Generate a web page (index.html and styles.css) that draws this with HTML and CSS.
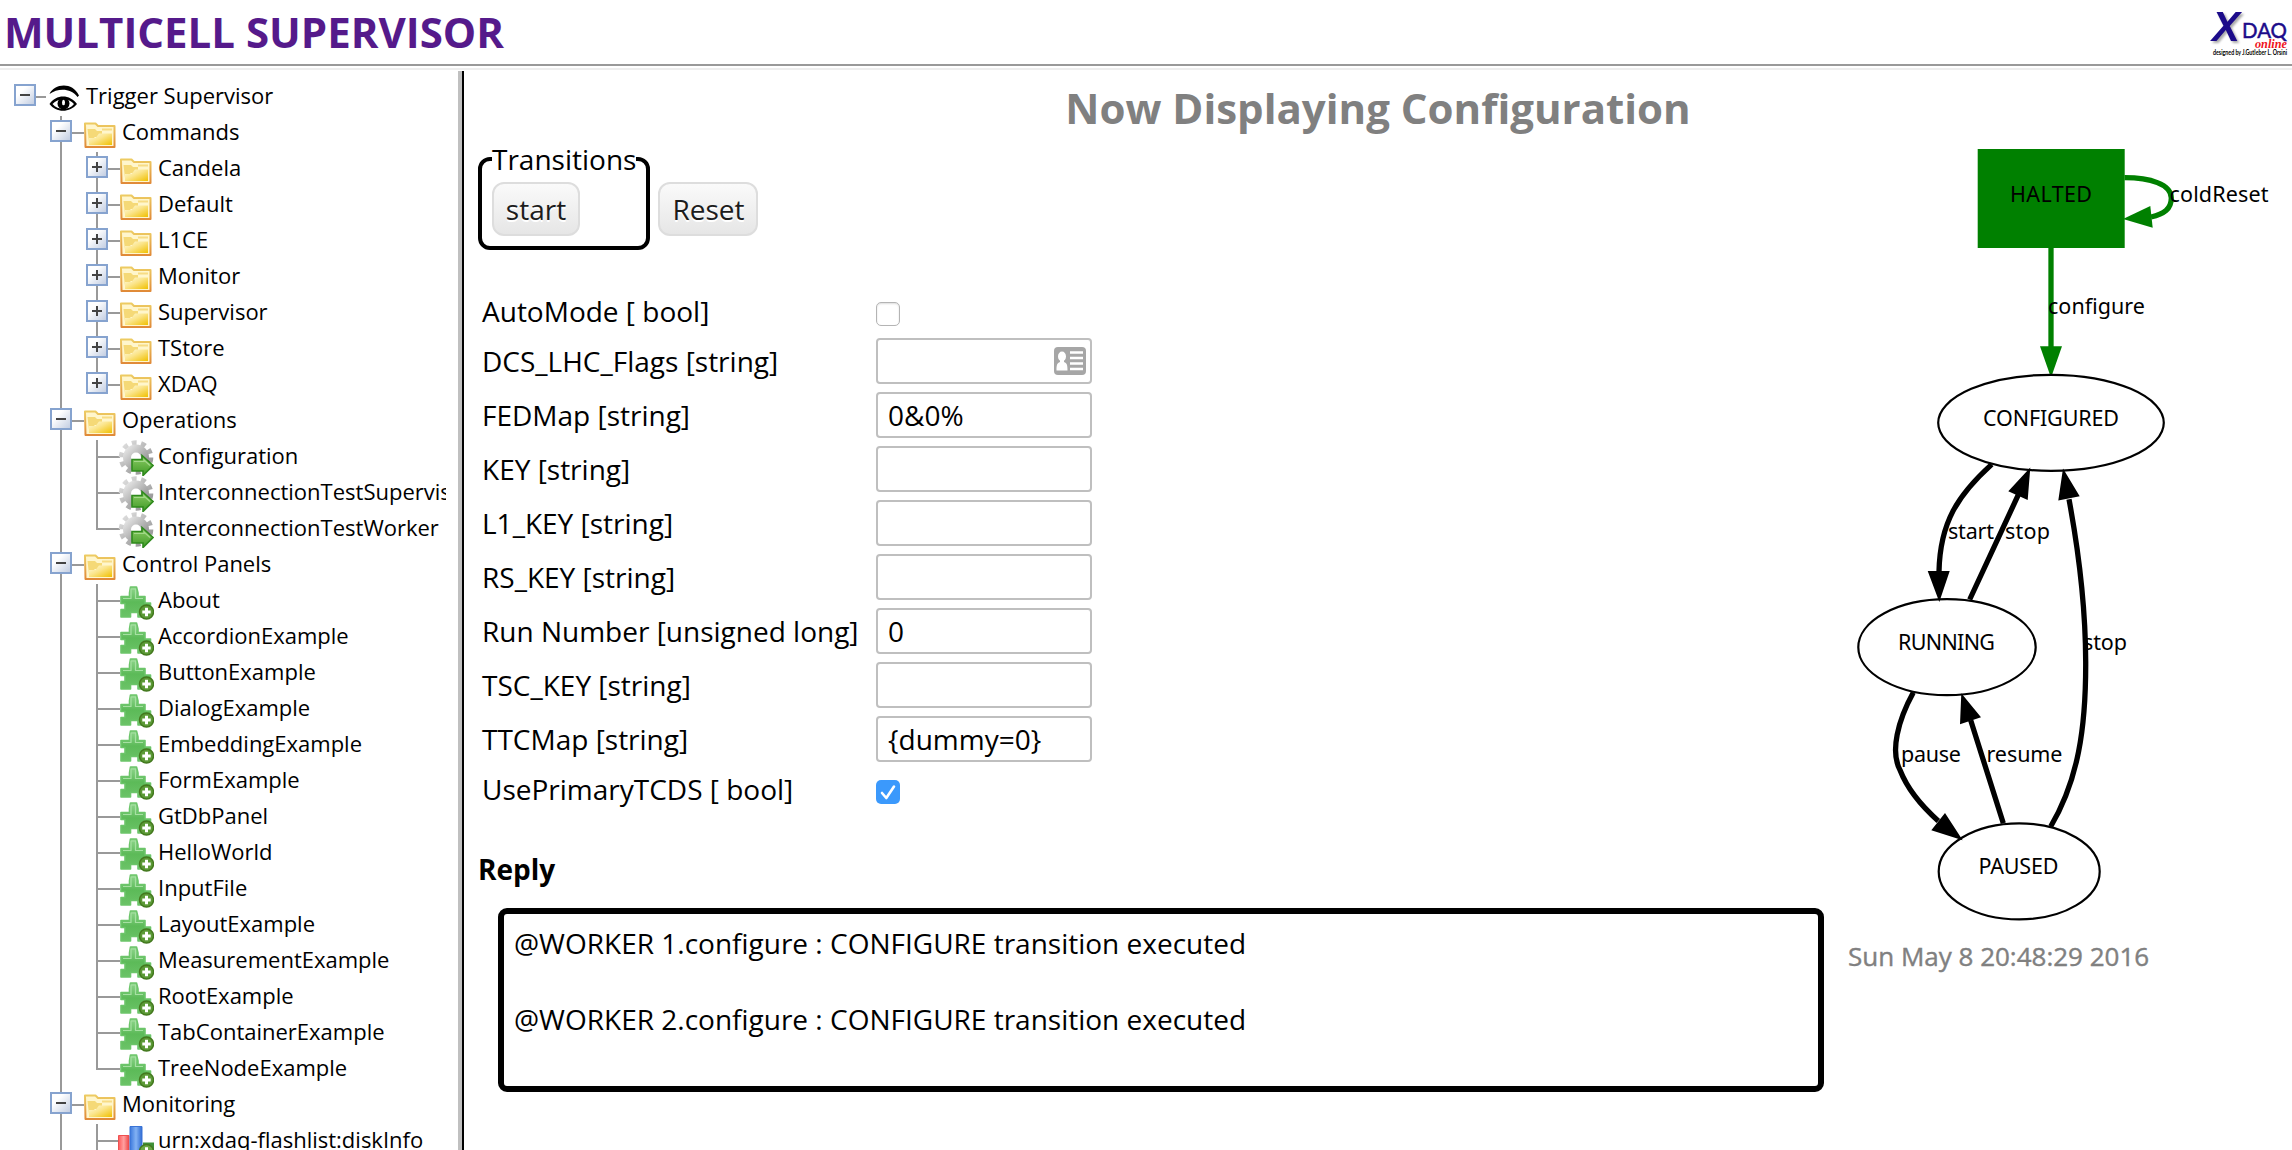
FILE: index.html
```html
<!DOCTYPE html>
<html lang="en">
<head>
<meta charset="utf-8">
<title>Multicell Supervisor</title>
<link rel="stylesheet" href="styles.css">
</head>
<body>
<svg class="sprite" aria-hidden="true">
  <defs>
    <linearGradient id="gFolder" x1="0" y1="0" x2="1" y2="1"><stop offset="0" stop-color="#fffbe0"/><stop offset=".45" stop-color="#fbe58c"/><stop offset="1" stop-color="#f0c000"/></linearGradient>
    <linearGradient id="gFolderEdge" x1="0" y1="0" x2="0" y2="1"><stop offset="0" stop-color="#edcb62"/><stop offset="1" stop-color="#e08a38"/></linearGradient>
    <linearGradient id="gGear" x1="0" y1="0" x2="1" y2="1"><stop offset="0" stop-color="#e2e2e2"/><stop offset="1" stop-color="#8c8c8c"/></linearGradient>
    <linearGradient id="gArrow" x1="0" y1="0" x2="0" y2="1"><stop offset="0" stop-color="#8ccc66"/><stop offset="1" stop-color="#3f9a25"/></linearGradient>
    <linearGradient id="gPuzzle" x1="0" y1="0" x2="0" y2="1"><stop offset="0" stop-color="#8fd68d"/><stop offset=".5" stop-color="#5cba58"/><stop offset="1" stop-color="#6bc367"/></linearGradient>
    <linearGradient id="gRed" x1="0" y1="0" x2="1" y2="0"><stop offset="0" stop-color="#ff5a5a"/><stop offset=".5" stop-color="#ffa0a0"/><stop offset="1" stop-color="#ee4444"/></linearGradient>
    <linearGradient id="gBlue" x1="0" y1="0" x2="1" y2="0"><stop offset="0" stop-color="#3a78dc"/><stop offset=".5" stop-color="#83b2f4"/><stop offset="1" stop-color="#2f6bd2"/></linearGradient>
  </defs>
  <symbol id="eye" viewBox="0 0 36 36">
    <path d="M3.500 14C8 4 26 1 33 15.500L31.500 17C25 8 12 8 3.500 14Z"/>
    <path d="M3.500 24C10 14 24 14 31 24C24 33 10 33 3.500 24ZM6.500 24C12 30.500 23 30.500 28 24C23 17.500 12 17.500 6.500 24Z" fill-rule="evenodd"/>
    <circle cx="17.500" cy="23.500" r="6"/><ellipse cx="17.500" cy="22.500" rx="1.500" ry="2.800" fill="#fff"/>
  </symbol>
  <symbol id="folder" viewBox="0 0 36 36">
    <path d="M3 7.500H13.500L16 10H32.500V31H3.500Z" fill="#fff6cc" stroke="url(#gFolderEdge)" stroke-width="2" stroke-linejoin="round"/>
    <path d="M5.500 13H13L15 15H20V19L15 21H13L7 26Z" fill="#f5d977"/>
    <path d="M20 13.500H30" stroke="#f7dc84" stroke-width="2"/>
    <path d="M7 29V22H13.500L17 17.500H30V29Z" fill="url(#gFolder)"/>
  </symbol>
  <symbol id="gear" viewBox="0 0 36 36">
    <circle cx="18" cy="17.500" r="14.800" fill="none" stroke="url(#gGear)" stroke-width="5" stroke-dasharray="4.800 4.500"/>
    <circle cx="18" cy="17.500" r="9" fill="none" stroke="url(#gGear)" stroke-width="8"/>
    <path d="M14 19.500H24V15.500L35 25.500L25 35.500V31H14Z" fill="url(#gArrow)" stroke="#2f8a1d" stroke-width="1.600"/>
    <path d="M16 21.500H26V20L32 25.500" fill="none" stroke="#a3d98a" stroke-width="1.200"/>
  </symbol>
  <symbol id="puzzle" viewBox="0 0 36 36">
    <path d="M3 12.500H11.500V9L12.500 3L18.500 3L20 9V12.500H27V19H32.500V26H27V33H20V28.500H12.500V33H3V25.500H7V19.500H3Z" fill="url(#gPuzzle)" stroke="#6cc56a" stroke-width="1.600" stroke-linejoin="round"/>
    <path d="M5 14.500H13V5H17.500V14.500H25" fill="none" stroke="#a6e0a2" stroke-width="1.200"/>
    <circle cx="28.500" cy="28" r="7" fill="#5b9a36" stroke="#44791f" stroke-width="1.500"/>
    <path d="M28.500 23.800V32.200M24.300 28H32.700" stroke="#fff" stroke-width="3"/>
  </symbol>
  <symbol id="chart" viewBox="0 0 36 36">
    <path d="M.500 11.500H11V36H.500Z" fill="url(#gRed)" stroke="#ee5050"/>
    <path d="M12 2.500H24V36H12Z" fill="url(#gBlue)" stroke="#3a74d6"/>
    <path d="M25 18.500H36V36H25Z" fill="#3f9138"/>
    <circle cx="28.500" cy="27.500" r="7" fill="#6aa844" stroke="#44791f" stroke-width="1.500"/>
    <path d="M28.500 23.300V31.700M24.300 27.500H32.700" stroke="#fff" stroke-width="3"/>
  </symbol>
</svg>

<header class="banner">
  <h1 class="banner-title">MULTICELL SUPERVISOR</h1>
  <svg class="logo" width="82" height="60" viewBox="0 0 82 60">
    <text class="logo-x" x="2" y="41" textLength="28" lengthAdjust="spacingAndGlyphs">X</text>
    <text class="logo-daq" x="32" y="38" textLength="45" lengthAdjust="spacingAndGlyphs">DAQ</text>
    <text class="logo-online" x="45" y="48" textLength="32" lengthAdjust="spacingAndGlyphs">online</text>
    <text class="logo-credit" x="3" y="55" textLength="74" lengthAdjust="spacingAndGlyphs">designed by J.Gutleber L. Orsini</text>
  </svg>
</header>

<div class="workspace">
  <nav class="tree">
    <div class="row"><i class="joint root"><b class="box minus"></b></i><svg class="icon"><use href="#eye"/></svg><span>Trigger Supervisor</span></div>
    <div class="row"><i class="gap"></i><i class="joint pass"><b class="box minus"></b></i><svg class="icon"><use href="#folder"/></svg><span>Commands</span></div>
    <div class="row"><i class="gap"></i><i class="gap line"></i><i class="joint pass"><b class="box plus"></b></i><svg class="icon"><use href="#folder"/></svg><span>Candela</span></div>
    <div class="row"><i class="gap"></i><i class="gap line"></i><i class="joint pass"><b class="box plus"></b></i><svg class="icon"><use href="#folder"/></svg><span>Default</span></div>
    <div class="row"><i class="gap"></i><i class="gap line"></i><i class="joint pass"><b class="box plus"></b></i><svg class="icon"><use href="#folder"/></svg><span>L1CE</span></div>
    <div class="row"><i class="gap"></i><i class="gap line"></i><i class="joint pass"><b class="box plus"></b></i><svg class="icon"><use href="#folder"/></svg><span>Monitor</span></div>
    <div class="row"><i class="gap"></i><i class="gap line"></i><i class="joint pass"><b class="box plus"></b></i><svg class="icon"><use href="#folder"/></svg><span>Supervisor</span></div>
    <div class="row"><i class="gap"></i><i class="gap line"></i><i class="joint pass"><b class="box plus"></b></i><svg class="icon"><use href="#folder"/></svg><span>TStore</span></div>
    <div class="row"><i class="gap"></i><i class="gap line"></i><i class="joint last"><b class="box plus"></b></i><svg class="icon"><use href="#folder"/></svg><span>XDAQ</span></div>
    <div class="row"><i class="gap"></i><i class="joint pass"><b class="box minus"></b></i><svg class="icon"><use href="#folder"/></svg><span>Operations</span></div>
    <div class="row"><i class="gap"></i><i class="gap line"></i><i class="joint pass"></i><svg class="icon"><use href="#gear"/></svg><span>Configuration</span></div>
    <div class="row"><i class="gap"></i><i class="gap line"></i><i class="joint pass"></i><svg class="icon"><use href="#gear"/></svg><span>InterconnectionTestSupervisor</span></div>
    <div class="row"><i class="gap"></i><i class="gap line"></i><i class="joint last"></i><svg class="icon"><use href="#gear"/></svg><span>InterconnectionTestWorker</span></div>
    <div class="row"><i class="gap"></i><i class="joint pass"><b class="box minus"></b></i><svg class="icon"><use href="#folder"/></svg><span>Control Panels</span></div>
    <div class="row"><i class="gap"></i><i class="gap line"></i><i class="joint pass"></i><svg class="icon"><use href="#puzzle"/></svg><span>About</span></div>
    <div class="row"><i class="gap"></i><i class="gap line"></i><i class="joint pass"></i><svg class="icon"><use href="#puzzle"/></svg><span>AccordionExample</span></div>
    <div class="row"><i class="gap"></i><i class="gap line"></i><i class="joint pass"></i><svg class="icon"><use href="#puzzle"/></svg><span>ButtonExample</span></div>
    <div class="row"><i class="gap"></i><i class="gap line"></i><i class="joint pass"></i><svg class="icon"><use href="#puzzle"/></svg><span>DialogExample</span></div>
    <div class="row"><i class="gap"></i><i class="gap line"></i><i class="joint pass"></i><svg class="icon"><use href="#puzzle"/></svg><span>EmbeddingExample</span></div>
    <div class="row"><i class="gap"></i><i class="gap line"></i><i class="joint pass"></i><svg class="icon"><use href="#puzzle"/></svg><span>FormExample</span></div>
    <div class="row"><i class="gap"></i><i class="gap line"></i><i class="joint pass"></i><svg class="icon"><use href="#puzzle"/></svg><span>GtDbPanel</span></div>
    <div class="row"><i class="gap"></i><i class="gap line"></i><i class="joint pass"></i><svg class="icon"><use href="#puzzle"/></svg><span>HelloWorld</span></div>
    <div class="row"><i class="gap"></i><i class="gap line"></i><i class="joint pass"></i><svg class="icon"><use href="#puzzle"/></svg><span>InputFile</span></div>
    <div class="row"><i class="gap"></i><i class="gap line"></i><i class="joint pass"></i><svg class="icon"><use href="#puzzle"/></svg><span>LayoutExample</span></div>
    <div class="row"><i class="gap"></i><i class="gap line"></i><i class="joint pass"></i><svg class="icon"><use href="#puzzle"/></svg><span>MeasurementExample</span></div>
    <div class="row"><i class="gap"></i><i class="gap line"></i><i class="joint pass"></i><svg class="icon"><use href="#puzzle"/></svg><span>RootExample</span></div>
    <div class="row"><i class="gap"></i><i class="gap line"></i><i class="joint pass"></i><svg class="icon"><use href="#puzzle"/></svg><span>TabContainerExample</span></div>
    <div class="row"><i class="gap"></i><i class="gap line"></i><i class="joint last"></i><svg class="icon"><use href="#puzzle"/></svg><span>TreeNodeExample</span></div>
    <div class="row"><i class="gap"></i><i class="joint pass"><b class="box minus"></b></i><svg class="icon"><use href="#folder"/></svg><span>Monitoring</span></div>
    <div class="row"><i class="gap"></i><i class="gap line"></i><i class="joint pass"></i><svg class="icon"><use href="#chart"/></svg><span>urn:xdaq-flashlist:diskInfo</span></div>
  </nav>
  <div class="splitter"></div>

  <main class="content">
    <h2 class="page-title">Now Displaying Configuration</h2>
    <div class="columns">
      <section class="operation">
        <div class="controls">
          <fieldset class="transitions">
            <legend>Transitions</legend>
            <button class="btn btn-start">start</button>
          </fieldset>
          <button class="btn btn-reset">Reset</button>
        </div>
        <div class="params">
          <div class="param check"><span>AutoMode [ bool]</span><i class="checkbox"></i></div>
          <div class="param"><span>DCS_LHC_Flags [string]</span><div class="field">
            <svg class="card" width="32" height="28" viewBox="0 0 32 28"><rect width="32" height="28" rx="4" fill="#a6a6a6"/><path d="M16 5.500H29M16 11H29M16 16.500H29M16 22H29" stroke="#fff" stroke-width="2.400"/><ellipse cx="8" cy="9.500" rx="4" ry="5" fill="#fff"/><path d="M6 13H10V15C13 16 13.500 18 13.500 23.500H2.500C2.500 18 3 16 6 15Z" fill="#fff"/></svg>
          </div></div>
          <div class="param"><span>FEDMap [string]</span><div class="field">0&amp;0%</div></div>
          <div class="param"><span>KEY [string]</span><div class="field"></div></div>
          <div class="param"><span>L1_KEY [string]</span><div class="field"></div></div>
          <div class="param"><span>RS_KEY [string]</span><div class="field"></div></div>
          <div class="param"><span>Run Number [unsigned long]</span><div class="field">0</div></div>
          <div class="param"><span>TSC_KEY [string]</span><div class="field"></div></div>
          <div class="param"><span>TTCMap [string]</span><div class="field">{dummy=0}</div></div>
          <div class="param check"><span>UsePrimaryTCDS [ bool]</span><i class="checkbox checked"><svg width="24" height="24" viewBox="0 0 24 24"><path d="M6 13L10.300 18L18 6.500" fill="none" stroke="#fff" stroke-width="2.600" stroke-linecap="round" stroke-linejoin="round"/></svg></i></div>
        </div>
        <h3 class="reply-title">Reply</h3>
        <div class="reply">@WORKER 1.configure : CONFIGURE transition executed<br><br>@WORKER 2.configure : CONFIGURE transition executed<br><br></div>
      </section>
      <aside class="state">
        <svg class="fsm" width="452" height="808" viewBox="0 0 452 808">
          <g class="done">
            <rect x="137.700" y="19" width="147" height="99"/>
            <path class="edge" d="M284.500 47.700C310 47.700 331 54 331.300 68C331.300 79 324 84 311 87"/>
            <path d="M283 89L310.300 76L312.700 97.700Z"/>
            <path class="edge" d="M211 118V217"/>
            <path d="M200 216.300H222L211 247.700Z"/>
          </g>
          <g class="states">
            <ellipse cx="211" cy="292.800" rx="112.800" ry="48"/>
            <ellipse cx="107" cy="517.200" rx="88.700" ry="48"/>
            <ellipse cx="179.200" cy="741.400" rx="80.500" ry="48"/>
          </g>
          <path class="edge" d="M151.700 334.400C118 365 100 392 99 441.600M129.700 469.500L178.500 364.400M210.700 696.500C238 650.300 246 598.600 245.700 531.500C245.500 474.600 238 417.800 229 369.300M73.300 562.500C58 590.300 50 621.300 60 640C68 660.600 84 678.200 98.300 690.900M163.300 693.300L130.700 590.300"/>
          <path d="M87.700 440.900H109.700L99.300 471.900ZM168.300 361.300L187.700 370L190.300 337.500ZM218.300 370.600L239.700 366.200L223 338.600ZM105 683L91.300 700.200L122.700 710.200ZM120 594.200L141 587.200L121.300 563.200Z"/>
          <g class="labels">
            <text x="170" y="71.500" textLength="82">HALTED</text>
            <text x="329.500" y="71.500" textLength="99">coldReset</text>
            <text x="208" y="184" textLength="97">configure</text>
            <text x="143" y="295.500" textLength="136">CONFIGURED</text>
            <text x="108" y="408.500" textLength="46">start</text>
            <text x="165" y="408.500" textLength="45">stop</text>
            <text x="58" y="520" textLength="97">RUNNING</text>
            <text x="243" y="520" textLength="44">stop</text>
            <text x="61" y="632.200" textLength="60">pause</text>
            <text x="146.500" y="632.200" textLength="76">resume</text>
            <text x="138.500" y="743.500" textLength="80">PAUSED</text>
          </g>
        </svg>
        <div class="stamp">Sun May 8 20:48:29 2016</div>
      </aside>
    </div>
  </main>
</div>
</body>
</html>
```
FILE: styles.css
```css
* { box-sizing: border-box; }
body {
  margin: 0;
  width: 2292px;
  height: 1150px;
  overflow: hidden;
  display: flex;
  flex-direction: column;
  background: #fff;
  color: #000;
  font: 28px/38px "Open Sans", "Noto Sans", sans-serif;
}
.sprite { position: absolute; width: 0; height: 0; }

.banner {
  display: flex;
  justify-content: space-between;
  flex: none;
  height: 70px;
  padding: 0 0 0 4px;
  border-bottom: 2px solid #eee;
  box-shadow: inset 0 -2px #fff, inset 0 -4px #999;
}
.banner-title { margin: 3px 0 0; color: #551a8b; font-size: 42px; line-height: 58px; }
.logo { overflow: visible; }
.logo text { font-family: Lato, sans-serif; }
.logo .logo-x { font: italic bold 42px "Liberation Sans", sans-serif; fill: #1c0b8a; filter: drop-shadow(2px 2px 1px #aaa); }
.logo .logo-daq { font-size: 22px; fill: #1c0b8a; stroke: #1c0b8a; stroke-width: .5px; }
.logo .logo-online { font: italic bold 13px "Liberation Serif", serif; fill: #f0141e; }
.logo .logo-credit { font-size: 6.5px; font-weight: bold; }

.workspace { display: flex; flex: 1; min-height: 0; }
.tree {
  flex: none;
  width: 446px;
  padding: 10px 0 0 7px;
  overflow: hidden;
  font-size: 22px;
}
.splitter {
  flex: none;
  width: 6px;
  margin: 1px 0 0 12px;
  background: linear-gradient(90deg, #c0c0c0 4px, #000 4px);
}
.row { display: flex; height: 36px; }
.row span { margin-left: 4px; line-height: 31px; white-space: nowrap; }
.icon { flex: none; width: 36px; height: 36px; margin-left: -2px; }
.gap, .joint { flex: none; width: 36px; height: 36px; background: no-repeat 17px 0 / 2px 100%; }
.line { background-image: linear-gradient(#999, #999); }
.joint {
  width: 41px;
  padding: 4px 0 0 7px;
  background-image: linear-gradient(#999, #999), linear-gradient(#999, #999);
  background-repeat: no-repeat;
  background-position: 18px 16px, 17px 0;
  background-size: 23px 2px, 2px 100%;
}
.last { background-size: 23px 2px, 2px 18px; }
.root { width: 39px; background-size: 23px 2px, 0 0; }
.root + .icon { margin-left: 0; }
.box {
  display: block;
  width: 22px;
  height: 22px;
  border: 2px solid #86a3cf;
  background: linear-gradient(#444, #444) center / 10px 2px no-repeat, linear-gradient(135deg, #fff 30%, #c3cee2);
}
.plus { background: linear-gradient(#444, #444) center / 10px 2px no-repeat, linear-gradient(#444, #444) center / 2px 10px no-repeat, linear-gradient(135deg, #fff 30%, #c3cee2); }

.content { flex: 1; padding: 9px 0 0 14px; }
.page-title {
  height: 51px;
  margin: 0;
  padding-right: 14px;
  color: #808080;
  font-size: 42px;
  line-height: 58px;
  text-align: center;
}
.columns { display: flex; justify-content: space-between; }
.operation { width: 1346px; padding-top: 10px; }
.controls { display: flex; gap: 8px; height: 110px; }
.transitions {
  width: 172px;
  height: 110px;
  margin: 0;
  padding: 0 10px;
  border: 4px solid #000;
  border-radius: 12px;
}
.transitions legend { padding: 0; height: 38px; }
.btn {
  display: block;
  height: 54px;
  padding: 0;
  border: 2px solid #ddd;
  border-radius: 12px;
  background: linear-gradient(#fafafa, #e6e6e6);
  color: #1c1c1c;
  font: inherit;
  text-shadow: 0 2px #fff;
}
.btn-start { width: 88px; margin-top: 4px; }
.btn-reset { width: 100px; margin-top: 42px; }
.params { padding: 42px 0 0 4px; }
.param { display: flex; align-items: center; height: 54px; }
.param > span { width: 394px; white-space: pre; }
.field {
  display: flex;
  align-items: center;
  justify-content: flex-start;
  width: 216px;
  height: 46px;
  padding: 0 4px 0 10px;
  border: 2px solid #bfbfbf;
  border-radius: 4px;
}
.card { margin-left: auto; }
.check { height: 42px; align-items: flex-start; }
.check:last-child { height: 44px; padding-top: 4px; }
.checkbox { width: 24px; height: 24px; margin-top: 10px; border: 1.5px solid #b4b4b4; border-radius: 5px; box-shadow: inset 0 1px 2px #ddd; }
.checked { border: 0; background: #3b99fc; box-shadow: none; }
.checked svg { display: block; }
.reply-title { margin: 40px 0 0; font-size: 28px; line-height: 38px; }
.reply {
  width: 1326px;
  height: 184px;
  margin: 20px 0 0 20px;
  padding: 10px;
  border: 6px solid #000;
  border-radius: 9px;
}
.state { width: 452px; }
.fsm { display: block; }
.done { fill: #008000; }
.edge { fill: none; stroke: #000; stroke-width: 5.3px; }
.done .edge { stroke: #008000; }
.states { fill: #fff; stroke: #000; stroke-width: 2.2px; }
.labels { font: 21.5px "Noto Sans", sans-serif; }
.stamp { padding-left: 8px; color: #808080; font-size: 26px; line-height: 36px; -webkit-text-stroke: .4px #808080; }
```
